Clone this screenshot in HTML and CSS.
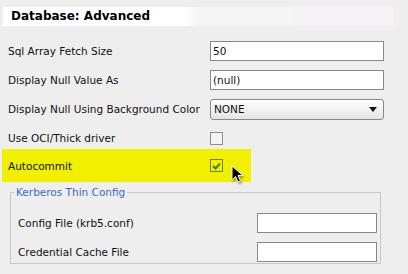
FILE: index.html
```html
<!DOCTYPE html>
<html lang="en">
<head>
    <meta charset="UTF-8">
    <title>Database: Advanced</title>
    <link rel="stylesheet" href="styles.css">
</head>
<body>
    <div class="title-bar">
        <h1>Database: Advanced</h1>
    </div>

    <div class="form">
        <div class="row r1">
            <label>Sql Array Fetch Size</label>
            <div class="text">50</div>
        </div>
        <div class="row r2">
            <label>Display Null Value As</label>
            <div class="text">(null)</div>
        </div>
        <div class="row r3">
            <label>Display Null Using Background Color</label>
            <div class="select">
                <span>NONE</span>
                <span class="arrow"></span>
            </div>
        </div>
        <div class="row r4">
            <label>Use OCI/Thick driver</label>
            <span class="check"></span>
        </div>
        <div class="row r5 highlight">
            <label>Autocommit</label>
            <span class="check checked">
                <svg width="9" height="8" viewBox="0 0 9 8"><path d="M1 4 L3.5 6.5 L8 1.5" fill="none" stroke="#3f7d12" stroke-width="2"/></svg>
            </span>
            <svg class="cursor" width="16" height="20" viewBox="0 0 16 20">
                <path d="M2 1 L2 15 L5.5 11.5 L8 17 L10.5 16 L8 10.5 L13 10.5 Z" fill="#000" stroke="#fff" stroke-width="1"/>
            </svg>
        </div>

        <div class="group">
            <div class="legend">Kerberos Thin Config</div>
            <div class="row g1">
                <label>Config File (krb5.conf)</label>
                <div class="text small"></div>
            </div>
            <div class="row g2">
                <label>Credential Cache File</label>
                <div class="text small"></div>
            </div>
        </div>
    </div>
</body>
</html>
```

FILE: styles.css
```css
body {
    margin: 0;
    background: #eeeeee;
    font-family: "DejaVu Sans", sans-serif;
    font-size: 10.5px;
    color: #111;
}

.title-bar {
    margin: 7px 0 0 3px;
    width: 391px;
    height: 19px;
    background: linear-gradient(to right, #ffffff 0%, #ffffff 46%, #f5f5f5 50%, #f5f5f5 73%, #f6f1f5 75%, #f6f1f5 100%);
}

h1 {
    margin: 0;
    padding-left: 8px;
    font-size: 12px;
    line-height: 19px;
    font-weight: bold;
    color: #000;
}

.form {
    padding-top: 10px;
}

.row {
    display: flex;
    align-items: center;
    position: relative;
}

.row label {
    width: 202px;
    padding-left: 8px;
    white-space: nowrap;
}

.r1 { height: 29px; }
.r2 { height: 29px; }
.r3 { height: 30px; }
.r4 { height: 25px; padding-top: 3px; box-sizing: border-box; }
.r5 { height: 33px; }

.text {
    box-sizing: border-box;
    width: 174px;
    height: 20px;
    padding: 0 2px;
    border: 1px solid #888;
    background: #fff;
    line-height: 18px;
    color: #111;
}

.select {
    box-sizing: border-box;
    width: 174px;
    height: 21px;
    border: 1px solid #888;
    border-radius: 3px;
    background: linear-gradient(#ffffff, #e4e4e4);
    display: flex;
    align-items: center;
    justify-content: space-between;
    padding: 0 6px 0 3px;
}

.select .arrow {
    width: 0;
    height: 0;
    border-left: 4px solid transparent;
    border-right: 4px solid transparent;
    border-top: 5px solid #111;
}

.check {
    box-sizing: border-box;
    width: 13px;
    height: 13px;
    border: 1px solid #8e8e8e;
    background: #f4f4f4;
    display: flex;
    align-items: center;
    justify-content: center;
}

.highlight {
    margin-left: 2px;
    width: 249px;
    background: #f0f000;
}

.highlight label {
    padding-left: 6px;
}

.check.checked {
    border-color: #7a7a10;
    background: transparent;
}

.cursor {
    position: absolute;
    left: 228px;
    top: 16px;
    filter: drop-shadow(1px 2px 1px rgba(0, 0, 0, 0.35));
}

.group {
    position: relative;
    margin: 10px 0 0 10px;
    width: 371px;
    box-sizing: border-box;
    padding-top: 15px;
    border: 1px solid #c8c8c8;
}

.group .legend {
    position: absolute;
    left: 3px;
    top: -8px;
    padding: 0 2px;
    background: #eeeeee;
    color: #3a6cc4;
    line-height: 14px;
}

.g1 {
    height: 29px;
}

.g2 {
    height: 26px;
    padding-top: 4px;
    box-sizing: border-box;
}

.group .row label {
    width: 239px;
    padding-left: 7px;
}

.text.small {
    width: 120px;
}
```
